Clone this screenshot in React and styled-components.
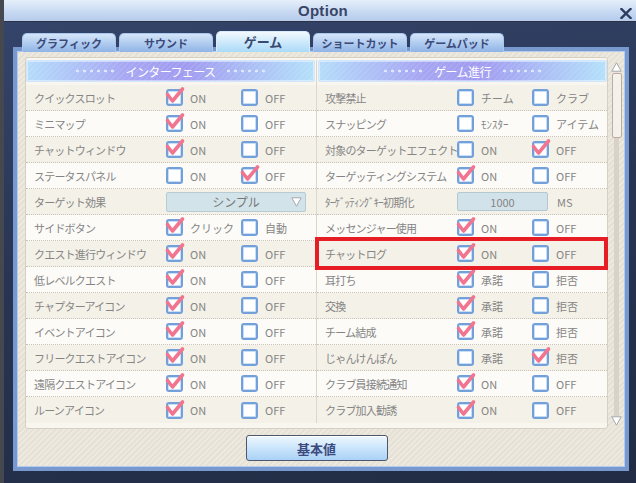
import React from 'react'
import styled, { createGlobalStyle, css } from 'styled-components'

const GlobalStyle = createGlobalStyle`
  html, body {
    margin: 0;
    padding: 0;
    background: #222d44;
  }
  body {
    font-family: "Noto Sans CJK JP", "Noto Sans", sans-serif;
  }
`

const leftRows = [
  { label: 'クイックスロット', opts: ['ON', 'OFF'], checked: 0 },
  { label: 'ミニマップ', opts: ['ON', 'OFF'], checked: 0 },
  { label: 'チャットウィンドウ', opts: ['ON', 'OFF'], checked: 0 },
  { label: 'ステータスパネル', opts: ['ON', 'OFF'], checked: 1 },
  { label: 'ターゲット効果', select: 'シンプル' },
  { label: 'サイドボタン', opts: ['クリック', '自動'], checked: 0 },
  { label: 'クエスト進行ウィンドウ', opts: ['ON', 'OFF'], checked: 0 },
  { label: '低レベルクエスト', opts: ['ON', 'OFF'], checked: 0 },
  { label: 'チャプターアイコン', opts: ['ON', 'OFF'], checked: 0 },
  { label: 'イベントアイコン', opts: ['ON', 'OFF'], checked: 0 },
  { label: 'フリークエストアイコン', opts: ['ON', 'OFF'], checked: 0 },
  { label: '遠隔クエストアイコン', opts: ['ON', 'OFF'], checked: 0 },
  { label: 'ルーンアイコン', opts: ['ON', 'OFF'], checked: 0 },
]

const rightRows = [
  { label: '攻撃禁止', opts: ['チーム', 'クラブ'], checked: null },
  { label: 'スナッピング', opts: ['ﾓﾝｽﾀｰ', 'アイテム'], checked: null },
  { label: '対象のターゲットエフェクト', opts: ['ON', 'OFF'], checked: 1 },
  { label: 'ターゲッティングシステム', opts: ['ON', 'OFF'], checked: 0 },
  { label: 'ﾀｰｹﾞｯﾃｨﾝｸﾞｷｰ初期化', input: '1000', unit: 'MS' },
  { label: 'メッセンジャー使用', opts: ['ON', 'OFF'], checked: 0 },
  { label: 'チャットログ', opts: ['ON', 'OFF'], checked: 0, highlight: true },
  { label: '耳打ち', opts: ['承諾', '拒否'], checked: 0 },
  { label: '交換', opts: ['承諾', '拒否'], checked: 0 },
  { label: 'チーム結成', opts: ['承諾', '拒否'], checked: 0 },
  { label: 'じゃんけんぽん', opts: ['承諾', '拒否'], checked: 1 },
  { label: 'クラブ員接続通知', opts: ['ON', 'OFF'], checked: 0 },
  { label: 'クラブ加入勧誘', opts: ['ON', 'OFF'], checked: 0 },
]

const tabs = ['グラフィック', 'サウンド', 'ゲーム', 'ショートカット', 'ゲームパッド']

function Check() {
  return (
    <CheckMark viewBox="0 0 20 20">
      <path d="M1.5 6.5 L6.5 13 L16.5 1" fill="none" stroke="#f27590" strokeWidth="3.6" strokeLinecap="round" strokeLinejoin="round" />
    </CheckMark>
  )
}

function Triangle({ up }) {
  return (
    <svg width="11" height="10" viewBox="0 0 11 10">
      <path
        d={up ? 'M5.5 0.8 L10.2 9.2 L0.8 9.2 Z' : 'M0.8 0.8 L10.2 0.8 L5.5 9.2 Z'}
        fill="#ffffff"
        stroke="#a4a8ac"
        strokeWidth="1"
      />
    </svg>
  )
}

function SettingRow({ row, odd }) {
  return (
    <Row $odd={odd} $highlight={row.highlight}>
      <Label>{row.label}</Label>
      {row.opts &&
        row.opts.map((o, i) => (
          <Option key={o}>
            <Box>{row.checked === i && <Check />}</Box>
            <OptText>{o}</OptText>
          </Option>
        ))}
      {row.select && (
        <SelectBox>
          {row.select}
          <SelectArrow>
            <Triangle />
          </SelectArrow>
        </SelectBox>
      )}
      {row.input && (
        <Field>
          <NumBox>{row.input}</NumBox>
          <OptText>{row.unit}</OptText>
        </Field>
      )}
    </Row>
  )
}

export default function App() {
  return (
    <>
      <GlobalStyle />
      <Window>
        <TitleBar>
          <span />
          <Title>Option</Title>
          <Close viewBox="0 0 12 11">
            <path d="M1.5 1 L10.5 10 M10.5 1 L1.5 10" stroke="#2a3c62" strokeWidth="2.4" strokeLinecap="square" />
          </Close>
        </TitleBar>
        <Body>
          <TabRow>
            {tabs.map((t) => (
              <Tab key={t} $active={t === 'ゲーム'}>{t}</Tab>
            ))}
          </TabRow>
          <Panel>
            <MainCol>
              <List>
                <Section $first>
                  <Header $first>
                    <Dots />
                    インターフェース
                    <Dots />
                  </Header>
                  {leftRows.map((r, i) => (
                    <SettingRow key={r.label} row={r} odd={i % 2 === 0} />
                  ))}
                </Section>
                <Section>
                  <Header>
                    <Dots />
                    ゲーム進行
                    <Dots />
                  </Header>
                  {rightRows.map((r, i) => (
                    <SettingRow key={r.label} row={r} odd={i % 2 === 0} />
                  ))}
                </Section>
              </List>
              <ResetButton>基本値</ResetButton>
            </MainCol>
            <Scroll>
              <Triangle up />
              <Thumb />
              <Track />
              <Triangle />
            </Scroll>
          </Panel>
        </Body>
      </Window>
    </>
  )
}

const Window = styled.div`
  width: 636px;
  height: 483px;
  box-sizing: border-box;
  border-left: 4px solid #45494f;
  display: flex;
  flex-direction: column;
  overflow: hidden;
`

const TitleBar = styled.div`
  height: 22px;
  box-sizing: border-box;
  border-bottom: 1px solid #2b3244;
  background: linear-gradient(#e6effa, #c8daf2 55%, #b6cbec);
  display: grid;
  grid-template-columns: 1fr auto 1fr;
  align-items: center;
  padding-left: 6px;
`

const Title = styled.div`
  font-family: "Liberation Sans", Arial, sans-serif;
  font-weight: bold;
  font-size: 15px;
  color: #3a4668;
  letter-spacing: 0.3px;
`

const Close = styled.svg`
  width: 12px;
  height: 11px;
  justify-self: end;
  margin-right: 4px;
  margin-top: 5px;
`

const Body = styled.div`
  flex: 1;
  padding: 9px 7px 0 9px;
  background: linear-gradient(170deg, #34446a 0%, #283552 45%, #212c44 100%);
`

const TabRow = styled.div`
  display: flex;
  align-items: flex-end;
  gap: 3px;
  height: 21px;
  padding-left: 9px;
  margin-bottom: -5px;
  position: relative;
  z-index: 2;
`

const Tab = styled.div`
  width: 94px;
  height: 19px;
  box-sizing: border-box;
  border: 1px solid #a8c6ee;
  border-bottom: none;
  border-radius: 5px 5px 0 0;
  background: linear-gradient(#d4e5f9, #8fb4e6);
  display: flex;
  align-items: center;
  justify-content: center;
  font-weight: bold;
  font-size: 11px;
  color: #3c4a7a;
  ${(p) =>
    p.$active &&
    css`
      height: 21px;
      border-color: #d8ecfc;
      background: linear-gradient(#f2f9fe, #aadaf8);
      font-size: 13px;
      color: #394a72;
      padding-bottom: 2px;
    `}
`

const Panel = styled.div`
  height: 424px;
  box-sizing: border-box;
  border: 4px solid #7898d0;
  box-shadow: inset 0 0 0 1px #b4cbee;
  background: repeating-linear-gradient(135deg, #ede9df 0 2px, #e5e1d6 2px 4px);
  padding: 6px 3px 0 8px;
  display: flex;
  align-items: flex-start;
`

const MainCol = styled.div`
  width: 584px;
  display: flex;
  flex-direction: column;
  align-items: center;
`

const List = styled.div`
  width: 100%;
  box-sizing: border-box;
  border: 1px solid #d6d0c2;
  border-radius: 3px;
  background: #f8f6ef;
  padding: 2px 0 5px;
  display: flex;
`

const Section = styled.div`
  width: ${(p) => (p.$first ? '291px' : 'auto')};
  flex: ${(p) => (p.$first ? 'none' : '1')};
  box-sizing: border-box;
  border-right: ${(p) => (p.$first ? '1px solid #ddd7cb' : 'none')};
`

const Header = styled.div`
  height: 22px;
  box-sizing: border-box;
  margin: ${(p) => (p.$first ? '0 1px 3px 0' : '0 0 3px 1px')};
  border: 1px solid #cfe6fd;
  border-radius: 2px;
  box-shadow: inset 0 0 0 1px rgba(255, 255, 255, 0.45);
  background:
    repeating-linear-gradient(135deg, rgba(255, 255, 255, 0.08) 0 2px, transparent 2px 4px),
    linear-gradient(90deg, #b4dcfa 0%, #a6a6f2 35%, #a09af0 55%, #b4e0fa 100%);
  display: flex;
  align-items: center;
  justify-content: center;
  gap: 4px;
  color: #ffffff;
  font-size: 12px;
  letter-spacing: -0.6px;
`

const Dots = styled.span`
  width: 42px;
  height: 6px;
  margin: 0 6px;
  background: radial-gradient(circle, #dfe6ff 1.2px, transparent 1.7px) 0 50% / 7px 6px repeat-x;
`

const Row = styled.div`
  position: relative;
  height: 26px;
  box-sizing: border-box;
  border-bottom: 1px dotted #c9c3b7;
  display: grid;
  grid-template-columns: 132px 75px 1fr;
  align-items: center;
  padding-left: 8px;
  background: ${(p) => (p.$odd ? '#f4f1e8' : '#fcfbf8')};

  &:last-child {
    border-bottom: none;
  }

  ${(p) =>
    p.$highlight &&
    css`
      &::after {
        content: '';
        position: absolute;
        top: -4px;
        bottom: -4px;
        left: -2px;
        right: -1px;
        border: 4px solid #e61d25;
        pointer-events: none;
        z-index: 3;
      }
    `}
`

const Label = styled.div`
  font-size: 11px;
  letter-spacing: -0.8px;
  color: #858585;
  white-space: nowrap;
`

const Option = styled.div`
  display: flex;
  align-items: center;
  gap: 7px;
  position: relative;
`

const Box = styled.div`
  position: relative;
  width: 17px;
  height: 17px;
  box-sizing: border-box;
  border: 2px solid #74a0da;
  border-radius: 3px;
  background: #ffffff;
  box-shadow: inset 0 0 0 1px #c6def8;
`

const CheckMark = styled.svg`
  position: absolute;
  left: -2px;
  top: -3px;
  width: 20px;
  height: 20px;
  overflow: visible;
`

const OptText = styled.span`
  font-size: 11px;
  color: #858585;
  white-space: nowrap;
`

const SelectBox = styled.div`
  grid-column: 2 / span 2;
  position: relative;
  width: 140px;
  height: 20px;
  box-sizing: border-box;
  border: 1px solid #b8cad3;
  border-radius: 2px;
  background: #d3e3ea;
  display: flex;
  align-items: center;
  justify-content: center;
  font-size: 12px;
  color: #777777;
`

const SelectArrow = styled.span`
  position: absolute;
  right: 3px;
  top: 4px;
  display: flex;
`

const Field = styled.div`
  grid-column: 2 / span 2;
  display: flex;
  align-items: center;
  gap: 9px;
`

const NumBox = styled.div`
  width: 91px;
  height: 19px;
  box-sizing: border-box;
  border: 1px solid #b4c8d0;
  border-radius: 2px;
  background: #d2e2ea;
  display: flex;
  align-items: center;
  justify-content: center;
  font-size: 11px;
  color: #858585;
`

const ResetButton = styled.div`
  margin-top: 6px;
  width: 142px;
  height: 26px;
  box-sizing: border-box;
  border: 1px solid #4c566c;
  border-radius: 3px;
  background: linear-gradient(#eef7fe, #cbe5fb 50%, #a9d2f6);
  box-shadow: inset 0 1px 0 #ffffff;
  display: flex;
  align-items: center;
  justify-content: center;
  font-weight: bold;
  font-size: 13px;
  color: #3c4a80;
`

const Scroll = styled.div`
  margin-left: 3px;
  margin-top: 5px;
  width: 11px;
  height: 364px;
  display: flex;
  flex-direction: column;
  align-items: center;
`

const Thumb = styled.div`
  width: 10px;
  height: 65px;
  margin-top: 1px;
  box-sizing: border-box;
  border: 1px solid #bfaaa4;
  border-radius: 2px;
  background: #f4f0ea;
`

const Track = styled.div`
  flex: 1;
  width: 5px;
  background: #d8d2c9;
`
